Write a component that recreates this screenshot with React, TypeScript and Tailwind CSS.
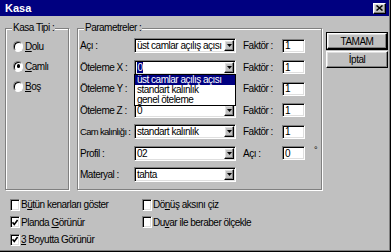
import React from 'react';

const font = "font-['Liberation_Sans',Arial,sans-serif] tracking-[-0.5px]";
const sunken =
    'border border-t-[#808080] border-l-[#808080] border-b-white border-r-white shadow-[inset_1px_1px_0_#000,inset_-1px_-1px_0_#dfdfdf]';
const raised =
    'border border-t-white border-l-white border-b-black border-r-black shadow-[inset_-1px_-1px_0_#808080,inset_1px_1px_0_#dfdfdf]';

const Combo = ({ children, list }: { children?: React.ReactNode; list?: boolean }) => (
    <div className={`relative flex h-[15px] w-[102px] shrink-0 items-center bg-white ${sunken}`}>
        <div className="flex-1 overflow-hidden whitespace-nowrap pl-[2px] leading-[11px]">{children}</div>
        <div className={`mr-[1px] flex h-[11px] w-[10px] shrink-0 items-center justify-center bg-[#c0c0c0] ${raised}`}>
            <svg width="5" height="3" viewBox="0 0 5 3">
                <path d="M0 0h5L2.5 3z" fill="#000" />
            </svg>
        </div>
        {list && (
            <div className="absolute left-[-1px] top-full z-10 w-[102px] border border-black bg-white">
                <div className="h-[10px] overflow-hidden whitespace-nowrap bg-[#000080] pl-[2px] leading-[10px] text-white">
                    üst camlar açılış açısı
                </div>
                <div className="h-[10px] pl-[2px] leading-[10px]">standart kalınlık</div>
                <div className="h-[10px] pl-[2px] leading-[10px]">genel öteleme</div>
            </div>
        )}
    </div>
);

const Field = ({ value }: { value: string }) => (
    <div className={`flex h-[14px] w-[23px] items-center bg-white pl-[2px] leading-[11px] ${sunken}`}>{value}</div>
);

const Group = ({ title, className, children }: { title: string; className: string; children: React.ReactNode }) => (
    <div className={`relative h-[162px] border border-[#808080] shadow-[1px_1px_0_#fff,inset_1px_1px_0_#fff] ${className}`}>
        <span className="absolute left-[6px] top-[-7px] whitespace-nowrap bg-[#c0c0c0] px-[1px] leading-[12px]">{title}</span>
        {children}
    </div>
);

const Radio = ({ checked, children }: { checked?: boolean; children: React.ReactNode }) => (
    <div className="flex h-[20px] items-center gap-[2px]">
        <div className="flex h-[11px] w-[10px] items-center justify-center rounded-full border border-[#808080] border-b-white border-r-white bg-white shadow-[inset_1px_1px_0_#000]">
            {checked && <div className="h-[4px] w-[3px] rounded-full bg-black" />}
        </div>
        <span>{children}</span>
    </div>
);

const Check = ({ checked, children }: { checked?: boolean; children: React.ReactNode }) => (
    <div className="flex h-[17.5px] items-center gap-[1px]">
        <div className={`flex h-[12px] w-[10px] items-center justify-center bg-white ${sunken}`}>
            {checked && (
                <svg width="6" height="7" viewBox="0 0 6 7">
                    <path d="M0.5 3.3L2.3 5.5L5.6 1" stroke="#000" strokeWidth="1.6" fill="none" />
                </svg>
            )}
        </div>
        <span className="whitespace-nowrap">{children}</span>
    </div>
);

// Öteleme Y's combo sits under the open list, so it shows nothing
const rows = [
    { label: 'Açı :', value: 'üst camlar açılış açısı', right: 'Faktör :', num: '1' },
    { label: 'Öteleme X :', focus: true, right: 'Faktör :', num: '1' },
    { label: 'Öteleme Y :', value: '', right: 'Faktör :', num: '1' },
    { label: 'Öteleme Z :', value: '0', right: 'Faktör :', num: '1' },
    { label: 'Cam kalınlığı :', value: 'standart kalınlık', right: 'Faktör :', num: '1', tight: true },
    { label: 'Profil :', value: '02', right: 'Açı :', num: '0', deg: true },
    { label: 'Materyal :', value: 'tahta' },
];

const App = () => {
    return (
        <div className={`h-[252px] w-[391px] border-b border-r border-black bg-[#c0c0c0] text-[10px] text-black ${font}`}>
            <div className="h-full border-b border-r border-[#808080]">
                {/* Title bar */}
                <div className="flex h-[16px] items-center justify-between bg-[#000080] pl-[5px] pr-[3px]">
                    <span className="text-[11px] font-bold leading-none tracking-normal text-white">Kasa</span>
                    <div className={`flex h-[11px] w-[13px] items-center justify-center bg-[#c0c0c0] ${raised}`}>
                        <svg width="7" height="6" viewBox="0 0 7 6">
                            <path d="M0.5 0.5L6.5 5.5M6.5 0.5L0.5 5.5" stroke="#000" strokeWidth="1.5" />
                        </svg>
                    </div>
                </div>

                {/* Groups and buttons */}
                <div className="mt-[12px] flex items-start pl-[5px]">
                    <Group title="Kasa Tipi :" className="w-[64px]">
                        <div className="pl-[7px] pt-[7px]">
                            <Radio><u>D</u>olu</Radio>
                            <Radio checked><u>C</u>amlı</Radio>
                            <Radio><u>B</u>oş</Radio>
                        </div>
                    </Group>

                    <Group title="Parametreler :" className="ml-[8px] w-[245px]">
                        <div className="pt-[6px]">
                            {rows.map((r) => (
                                <div key={r.label} className="flex h-[21.5px] items-center">
                                    <span
                                        className={`w-[56px] shrink-0 overflow-hidden whitespace-nowrap pl-[2px] ${
                                            r.tight ? 'text-[9.5px] tracking-[-0.7px]' : ''
                                        }`}
                                    >
                                        {r.label}
                                    </span>
                                    <Combo list={r.focus}>
                                        {r.focus ? <span className="bg-[#000080] px-[0.5px] text-white">0</span> : r.value}
                                    </Combo>
                                    {r.right && <span className="ml-[7px] w-[39px] whitespace-nowrap">{r.right}</span>}
                                    {r.num && <Field value={r.num} />}
                                    {r.deg && <span className="mb-[6px] ml-[9px] text-[9px]">°</span>}
                                </div>
                            ))}
                        </div>
                    </Group>

                    <div className="ml-[4px] mt-[4px] flex w-[62px] flex-col gap-[1px]">
                        <div className="h-[18px] border border-black">
                            <div className={`flex h-full items-center justify-center ${raised}`}>TAMAM</div>
                        </div>
                        <div className={`flex h-[17px] items-center justify-center ${raised}`}>İptal</div>
                    </div>
                </div>

                {/* Options */}
                <div className="mt-[6px] grid grid-cols-[132px_1fr] pl-[10px]">
                    <div>
                        <Check>B<u>ü</u>tün kenarları göster</Check>
                        <Check checked>Planda <u>G</u>örünür</Check>
                        <Check checked><u>3</u> Boyutta Görünür</Check>
                    </div>
                    <div>
                        <Check>Dö<u>n</u>üş aksını çiz</Check>
                        <Check>Du<u>v</u>ar ile beraber ölçekle</Check>
                    </div>
                </div>
            </div>
        </div>
    );
};

export default App;
